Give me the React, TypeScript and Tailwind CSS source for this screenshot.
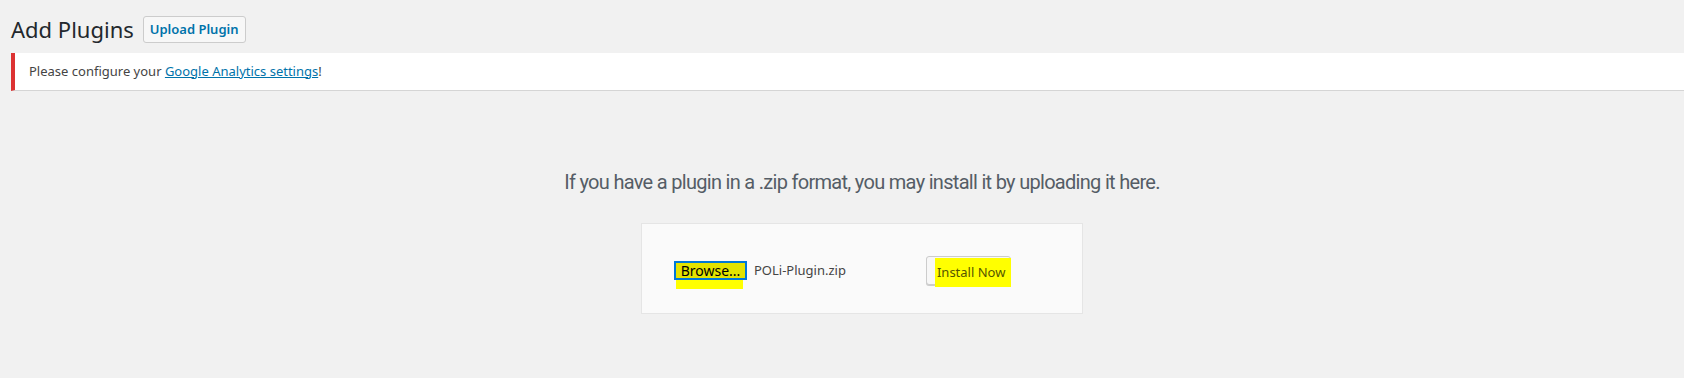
export default function App() {
  return (
    <div
      className="w-full h-[378px] overflow-hidden bg-[#f1f1f1]"
      style={{ fontFamily: '"Noto Sans", "Open Sans", sans-serif' }}
    >
      <div className="pl-[11px] pt-[16px] flex items-center gap-[9px] h-[43px]">
        <h1 className="text-[22px] leading-[27px] text-[#23282d] font-normal">Add Plugins</h1>
        <button className="h-[27px] px-[6px] text-[13px] font-semibold text-[#0073aa] bg-[#f7f7f7] border border-[#cccccc] rounded-[3px] leading-none">
          Upload Plugin
        </button>
      </div>

      <div className="ml-[11px] mt-[10px] h-[38px] bg-white border-l-4 border-[#dc3232] border-b border-b-[#d5d5d5] flex items-center pl-[14px]">
        <p className="text-[13px] text-[#444]">
          Please configure your{" "}
          <a href="#" className="text-[#0073aa] underline">
            Google Analytics settings
          </a>
          !
        </p>
      </div>

      <div className="pl-[40px] flex flex-col items-center">
        <p
          className="mt-[79px] text-[20px] leading-[24px] text-[#555d66] tracking-[-0.7px]"
          style={{ fontFamily: 'Roboto, "Open Sans", sans-serif' }}
        >
          If you have a plugin in a .zip format, you may install it by uploading it here.
        </p>
        <div className="mt-[29px] w-[442px] h-[91px] bg-[#fafafa] border border-[#e5e5e5] flex items-center pl-[32px] pt-[4px]">
          <div className="relative flex items-center">
            <span className="relative z-10 h-[19px] w-[73px] flex items-center justify-center text-[14px] text-black bg-[#e3e300] border-2 border-[#0078d7] leading-none">
              Browse...
            </span>
            <span className="absolute left-[2px] top-[17px] w-[67px] h-[11px] bg-[#ffff00]" />
          </div>
          <span className="ml-[7px] text-[13px] text-[#444]">POLi-Plugin.zip</span>
          <div className="ml-[80px] relative h-[29px] w-[85px] bg-[#f7f7f7] border border-[#cccccc] rounded-[3px] shadow-[0_1px_0_#ccc]">
            <span className="absolute left-[8px] top-[1px] w-[76px] h-[29px] bg-[#ffff00] flex items-center pl-[2px] text-[13px] text-[#555500]">
              Install Now
            </span>
          </div>
        </div>
      </div>
    </div>
  );
}
